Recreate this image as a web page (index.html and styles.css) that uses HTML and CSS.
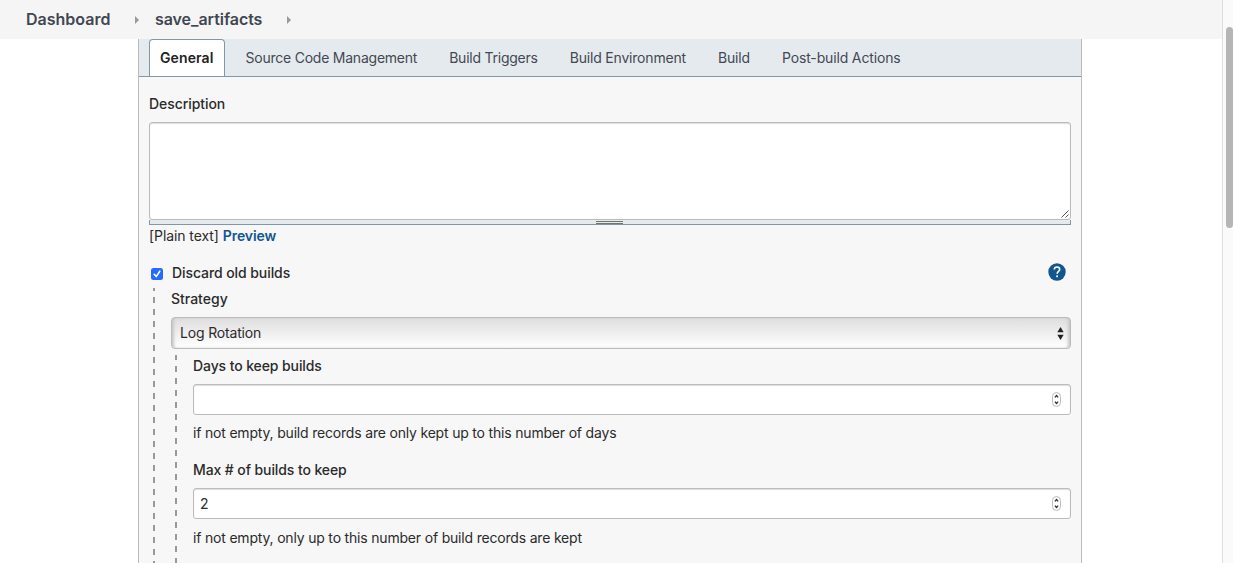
FILE: index.html
```html
<!DOCTYPE html>
<html lang="en">
<head>
<meta charset="utf-8">
<title>save_artifacts Config</title>
<link rel="stylesheet" href="styles.css">
</head>
<body>
<div class="window">
  <div class="page">
    <nav class="breadcrumbs">
      <a class="crumb crumb-home">Dashboard</a>
      <svg class="arrow" width="4" height="8" viewBox="0 0 4 8"><path d="M0 0L4 4L0 8Z" fill="#999"/></svg>
      <a class="crumb crumb-job">save_artifacts</a>
      <svg class="arrow" width="4" height="8" viewBox="0 0 4 8"><path d="M0 0L4 4L0 8Z" fill="#999"/></svg>
    </nav>
    <main class="panel">
      <div class="tabs">
        <a class="tab active"><span class="t-general">General</span></a>
        <a class="tab"><span class="t-scm">Source Code Management</span></a>
        <a class="tab"><span class="t-triggers">Build Triggers</span></a>
        <a class="tab"><span class="t-env">Build Environment</span></a>
        <a class="tab"><span class="t-build">Build</span></a>
        <a class="tab"><span class="t-post">Post-build Actions</span></a>
      </div>
      <div class="form">
        <div class="label label-description"><span class="t-desc">Description</span></div>
        <div class="textarea">
          <svg width="8" height="8" viewBox="0 0 8 8"><path d="M0.5 7.5L7.5 0.5M4.5 7.5L7.5 4.5" stroke="#555" stroke-width="1" fill="none"/></svg>
        </div>
        <div class="handle"><span class="grip"></span></div>
        <div class="format"><span class="t-plain">[Plain text]</span><a class="preview">Preview</a></div>
        <div class="option">
          <svg class="check" width="12" height="12" viewBox="0 0 12 12"><rect width="12" height="12" rx="2.5" fill="#246bfd"/><path d="M3.2 6.3L5.2 8.6L8.8 3.2" fill="none" stroke="#fff" stroke-width="1.6" stroke-linecap="round" stroke-linejoin="round"/></svg>
          <span class="label t-discard">Discard old builds</span>
          <svg class="help" width="18" height="18" viewBox="0 0 18 18"><circle cx="9" cy="9" r="8.7" fill="#12558f"/><path d="M6.3 6.6C6.3 4.9 7.4 4 9 4S11.7 5 11.7 6.4C11.7 8.3 9.1 8.4 9.1 10.8" fill="none" stroke="#fff" stroke-width="1.6"/><rect x="8.2" y="12.4" width="1.8" height="1.8" fill="#fff"/></svg>
        </div>
        <div class="nested nested-outer">
          <div class="label label-strategy"><span class="t-strategy">Strategy</span></div>
          <div class="select">
            <span class="t-log">Log Rotation</span>
            <svg width="7" height="13" viewBox="0 0 7 13"><path d="M0.3 5.2L3.5 0L6.7 5.2ZM0.3 7.8L3.5 13L6.7 7.8Z" fill="#222"/></svg>
          </div>
          <div class="nested nested-inner">
            <div class="label label-days"><span class="t-days">Days to keep builds</span></div>
            <div class="input"><span></span>
              <svg width="9" height="15" viewBox="0 0 9 15"><rect x=".5" y=".5" width="8" height="14" rx="4" fill="#fff" stroke="#bbb"/><path d="M2.9 5.4L4.5 3.6L6.1 5.4M2.9 9.6L4.5 11.4L6.1 9.6" fill="none" stroke="#333" stroke-width="1.4"/></svg>
            </div>
            <div class="hint hint-days"><span class="t-hint">if not empty, build records are only kept up to this number of days</span></div>
            <div class="label label-max"><span class="t-max">Max # of builds to keep</span></div>
            <div class="input"><span>2</span>
              <svg width="9" height="15" viewBox="0 0 9 15"><rect x=".5" y=".5" width="8" height="14" rx="4" fill="#fff" stroke="#bbb"/><path d="M2.9 5.4L4.5 3.6L6.1 5.4M2.9 9.6L4.5 11.4L6.1 9.6" fill="none" stroke="#333" stroke-width="1.4"/></svg>
            </div>
            <div class="hint hint-max"><span class="t-hint">if not empty, only up to this number of build records are kept</span></div>
          </div>
        </div>
      </div>
    </main>
  </div>
  <div class="scrollbar"><div class="thumb"></div></div>
</div>
</body>
</html>
```

FILE: styles.css
```css
* { box-sizing: border-box; }
body {
  margin: 0;
  background: #fff;
  color: #2b2b2b;
  font: 14px/20px Inter, "Liberation Sans", sans-serif;
  overflow: hidden;
}
svg { display: block; flex: none; }
.window { display: flex; width: 1233px; height: 563px; overflow: hidden; white-space: nowrap; }
.page { width: 1222px; display: flex; flex-direction: column; }
.breadcrumbs {
  flex: none;
  height: 39px;
  padding: 0 0 1px 26px;
  display: flex;
  align-items: center;
  background: #f5f5f5;
  color: #414651;
  font-size: 16px;
  font-weight: 600;
}
.crumb-home { width: 109px; }
.crumb-job { width: 132px; margin-left: 16px; letter-spacing: -0.06px; }
.arrow { margin-top: 1px; }
.panel {
  flex: none;
  width: 944px;
  height: 524px;
  margin-left: 138px;
  background: #f7f7f7;
  border: solid #bbb;
  border-width: 0 1px;
}
.tabs {
  height: 38px;
  padding-left: 10px;
  display: flex;
  background: #e5eaee;
  border-bottom: 1px solid #8197a8;
  color: #434852;
}
.tab { height: 37px; padding: 9px 0 0; margin-right: 32px; }
.tab.active {
  width: 76px;
  margin-right: 20.5px;
  padding: 8px 0 0 10px;
  background: #fff;
  border: 1px solid #8197a8;
  border-bottom: 0;
  border-radius: 4px 4px 0 0;
  color: #222;
  font-weight: 600;
}
.t-general { letter-spacing: 0.1px; }
.t-scm { letter-spacing: -0.23px; }
.t-triggers { letter-spacing: -0.24px; }
.t-env { letter-spacing: -0.19px; }
.t-build { letter-spacing: -0.15px; }
.t-post { letter-spacing: -0.15px; }
.t-desc { letter-spacing: -0.07px; }
.t-plain { letter-spacing: -0.08px; }
.t-discard { letter-spacing: -0.08px; }
.t-log { letter-spacing: -0.17px; }
.t-days, .t-max { letter-spacing: -0.1px; }
.t-hint { letter-spacing: -0.187px; }
.form { padding: 17px 10px 0; }
.label { font-weight: 500; }
.textarea {
  height: 98px;
  margin-top: 8px;
  padding: 0 1px 1px 0;
  display: flex;
  justify-content: flex-end;
  align-items: flex-end;
  background: #fff;
  border: 1px solid #bbb;
  border-radius: 3px;
  box-shadow: inset 0 1px 1px #ddd;
}
.handle {
  height: 5px;
  display: flex;
  justify-content: center;
  background: #e5eaee;
  border: solid #8197a8;
  border-width: 0 1px 1px;
}
.grip { width: 27px; height: 3px; margin: 1px 1px 0 0; border: solid #70756f; border-width: 1px 0; }
.format { display: flex; margin-top: 1px; }
.preview { margin-left: 4px; color: #12558f; font-weight: 600; letter-spacing: -0.1px; }
.option { height: 20px; margin-top: 17px; padding-left: 2px; display: flex; align-items: center; }
.option .label { margin-left: 9px; }
.check { margin-top: 2px; }
.help { margin: -2px 5px 0 auto; }
.nested {
  background-repeat: no-repeat;
  background-image: repeating-linear-gradient(#999 0 6px, transparent 6px 12px);
}
.nested-outer {
  height: 280px;
  margin-top: 5px;
  padding-left: 22px;
  background-size: 2px 290px;
  background-position: 4px -3px;
}
.label-strategy { height: 20px; padding-top: 1px; }
.select {
  height: 32px;
  margin-top: 9px;
  padding: 0 6px 0 8px;
  display: flex;
  align-items: center;
  justify-content: space-between;
  border: 1px solid #bbb;
  border-radius: 4px;
  background: linear-gradient(#dedede, #fff);
  box-shadow: inset 3px 0 3px -1px #c8c8c8, inset -3px 0 3px -1px #c8c8c8;
}
.nested-inner {
  height: 208px;
  margin-top: 6px;
  padding-left: 22px;
  background-size: 2px 220px;
  background-position: 4px -1px;
}
.label-days { height: 29px; padding-top: 1px; }
.input {
  height: 31px;
  padding: 0 9px 0 6px;
  display: flex;
  align-items: center;
  justify-content: space-between;
  background: #fff;
  border: 1px solid #bbb;
  border-radius: 3px;
  box-shadow: inset 0 1px 1px #ddd;
}
.hint-days { margin-top: 8px; }
.label-max { height: 28px; margin-top: 17px; }
.hint-max { margin-top: 9px; }
.scrollbar {
  width: 11px;
  padding: 27px 0 0 3px;
  background: #fafafa;
  border-left: 1px solid #dedede;
}
.thumb { width: 7px; height: 201px; background: #b5b5b5; border-radius: 4px; }
```
